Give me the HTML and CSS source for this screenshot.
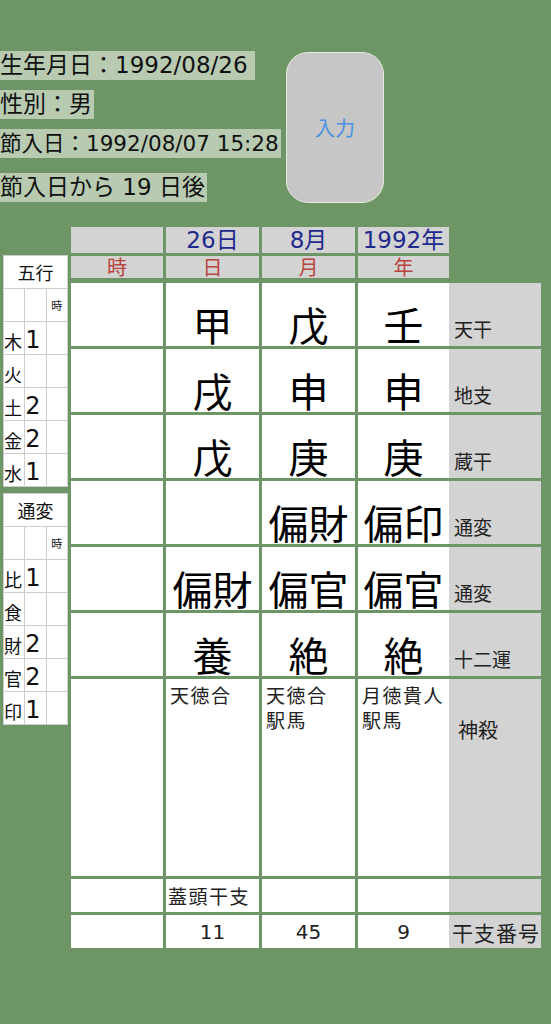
FILE: index.html
```html
<!DOCTYPE html>
<html lang="ja">
<head>
    <meta charset="UTF-8">
    <meta name="viewport" content="width=device-width, initial-scale=1.0">
    <title>命式</title>
    <link rel="stylesheet" href="styles.css">
</head>
<body>
    <div class="screen">
        <div class="top">
            <div class="info">
                <span class="info-label info-birth">生年月日：1992/08/26</span>
                <span class="info-label">性別：男</span>
                <span class="info-label info-small">節入日：1992/08/07 15:28</span>
                <span class="info-label info-after">節入日から 19 日後</span>
            </div>
            <button class="input-btn">入力</button>
        </div>

        <div class="board">
            <!-- Counts -->
            <div class="side">
                <table class="count-table">
                    <tr><th colspan="3">五行</th></tr>
                    <tr><td></td><td></td><td class="mini">時</td></tr>
                    <tr><td class="kind">木</td><td class="num">1</td><td></td></tr>
                    <tr><td class="kind">火</td><td class="num"></td><td></td></tr>
                    <tr><td class="kind">土</td><td class="num">2</td><td></td></tr>
                    <tr><td class="kind">金</td><td class="num">2</td><td></td></tr>
                    <tr><td class="kind">水</td><td class="num">1</td><td></td></tr>
                </table>
                <table class="count-table">
                    <tr><th colspan="3">通変</th></tr>
                    <tr><td></td><td></td><td class="mini">時</td></tr>
                    <tr><td class="kind">比</td><td class="num">1</td><td></td></tr>
                    <tr><td class="kind">食</td><td class="num"></td><td></td></tr>
                    <tr><td class="kind">財</td><td class="num">2</td><td></td></tr>
                    <tr><td class="kind">官</td><td class="num">2</td><td></td></tr>
                    <tr><td class="kind">印</td><td class="num">1</td><td></td></tr>
                </table>
            </div>

            <!-- Chart -->
            <div class="chart">
                <div class="head date"></div>
                <div class="head date">26日</div>
                <div class="head date">8月</div>
                <div class="head date">1992年</div>
                <div></div>

                <div class="head pillar">時</div>
                <div class="head pillar">日</div>
                <div class="head pillar">月</div>
                <div class="head pillar">年</div>
                <div></div>

                <div class="cell"></div>
                <div class="cell big">甲</div>
                <div class="cell big">戊</div>
                <div class="cell big">壬</div>
                <div class="label">天干</div>

                <div class="cell"></div>
                <div class="cell big">戌</div>
                <div class="cell big">申</div>
                <div class="cell big">申</div>
                <div class="label">地支</div>

                <div class="cell"></div>
                <div class="cell big">戊</div>
                <div class="cell big">庚</div>
                <div class="cell big">庚</div>
                <div class="label">蔵干</div>

                <div class="cell"></div>
                <div class="cell big"></div>
                <div class="cell big">偏財</div>
                <div class="cell big">偏印</div>
                <div class="label">通変</div>

                <div class="cell"></div>
                <div class="cell big">偏財</div>
                <div class="cell big">偏官</div>
                <div class="cell big">偏官</div>
                <div class="label">通変</div>

                <div class="cell"></div>
                <div class="cell big">養</div>
                <div class="cell big">絶</div>
                <div class="cell big">絶</div>
                <div class="label">十二運</div>

                <div class="cell"></div>
                <div class="cell stars">天徳合</div>
                <div class="cell stars">天徳合<br>駅馬</div>
                <div class="cell stars">月徳貴人<br>駅馬</div>
                <div class="label label-stars">神殺</div>

                <div class="cell"></div>
                <div class="cell note">蓋頭干支</div>
                <div class="cell"></div>
                <div class="cell"></div>
                <div class="label"></div>

                <div class="cell"></div>
                <div class="cell number">11</div>
                <div class="cell number">45</div>
                <div class="cell number">9</div>
                <div class="label label-number">干支番号</div>
            </div>
        </div>
    </div>
</body>
</html>
```

FILE: styles.css
```css
/* Page */
body {
    margin: 0;
    padding: 0;
    background: #6e9565;
    font-family: "DejaVu Sans", "Noto Sans CJK JP", sans-serif;
    color: #111;
}

.screen {
    width: 551px;
    min-height: 1024px;
}

/* Top info */
.top {
    display: flex;
    align-items: flex-start;
    padding-top: 51px;
}

.info {
    width: 286px;
    display: flex;
    flex-direction: column;
    align-items: flex-start;
    gap: 10px;
}

.info-label {
    height: 29px;
    line-height: 29px;
    padding-right: 2px;
    font-size: 23px;
    background: #b8cbb1;
    white-space: nowrap;
}

.info-birth {
    padding-right: 7px;
}

.info-small {
    font-size: 21.5px;
}

.info-after {
    margin-top: 5px;
}

.input-btn {
    width: 98px;
    height: 151px;
    margin-top: 1px;
    background: #c6c6c6;
    border: 1.5px solid #e3ecdb;
    border-radius: 22px;
    color: #4a8fe0;
    font-family: "Noto Sans CJK JP", sans-serif;
    font-size: 20px;
    padding: 0;
}

/* Board */
.board {
    display: flex;
    align-items: flex-start;
    margin-top: 24px;
}

.side {
    margin-left: 3px;
    margin-top: 28px;
    width: 65px;
}

.count-table {
    width: 65px;
    border-collapse: collapse;
    background: white;
    table-layout: fixed;
    margin-bottom: 6px;
}

.count-table th,
.count-table td {
    border: 1px solid #cdcdcd;
    height: 32px;
    padding: 0;
    font-weight: normal;
}

.count-table th {
    font-size: 18px;
    text-align: center;
    font-family: "Noto Sans CJK JP", sans-serif;
}

.count-table td:nth-child(1) {
    width: 20px;
}

.count-table td:nth-child(2) {
    width: 20px;
}

.count-table .mini {
    font-size: 11px;
    text-align: center;
    vertical-align: middle;
    font-family: "Noto Sans CJK JP", sans-serif;
}

.count-table .kind {
    font-size: 18px;
    font-family: "Noto Sans CJK JP", sans-serif;
    vertical-align: bottom;
    line-height: 26px;
}

.count-table .num {
    font-size: 24px;
    vertical-align: bottom;
    line-height: 28px;
}

/* Chart grid */
.chart {
    margin-left: 3px;
    display: grid;
    grid-template-columns: 92px 93px 93px 91px 89px;
    grid-template-rows: 26px 24px repeat(6, 63px) 197px 33px 33px;
    gap: 3px;
}

.head {
    background: #d3d3d3;
    text-align: center;
}

.date {
    color: #1f2a8c;
    font-size: 23px;
    line-height: 27px;
    overflow: hidden;
}

.pillar {
    color: #b8453e;
    font-size: 20px;
    line-height: 22px;
    margin-bottom: 2px;
    font-family: "Noto Sans CJK JP", sans-serif;
}

.cell {
    background: white;
}

.big {
    display: flex;
    justify-content: center;
    align-items: center;
    padding-top: 18px;
    font-size: 40px;
    font-family: "Noto Sans CJK JP", sans-serif;
    color: #000;
    white-space: nowrap;
}

.stars {
    padding: 3px 0 0 4px;
    font-size: 19px;
    line-height: 25px;
    font-family: "Noto Sans CJK JP", sans-serif;
    color: #222;
    letter-spacing: 1.5px;
}

.note {
    display: flex;
    align-items: center;
    padding-left: 2px;
    font-size: 19px;
    font-family: "Noto Sans CJK JP", sans-serif;
    color: #222;
    letter-spacing: 1.5px;
}

.number {
    display: flex;
    justify-content: center;
    align-items: center;
    font-size: 20px;
    color: #222;
}

.label {
    margin-left: -3px;
    background: #d3d3d3;
    display: flex;
    align-items: flex-end;
    padding: 0 0 6px 5px;
    font-size: 19px;
    line-height: 22px;
    font-family: "Noto Sans CJK JP", sans-serif;
    color: #222;
}

.label-stars {
    align-items: flex-start;
    padding: 40px 0 0 9px;
    font-size: 20px;
}

.label-number {
    align-items: center;
    padding: 0 0 0 3px;
    font-size: 21px;
    letter-spacing: 1px;
    white-space: nowrap;
}
```
